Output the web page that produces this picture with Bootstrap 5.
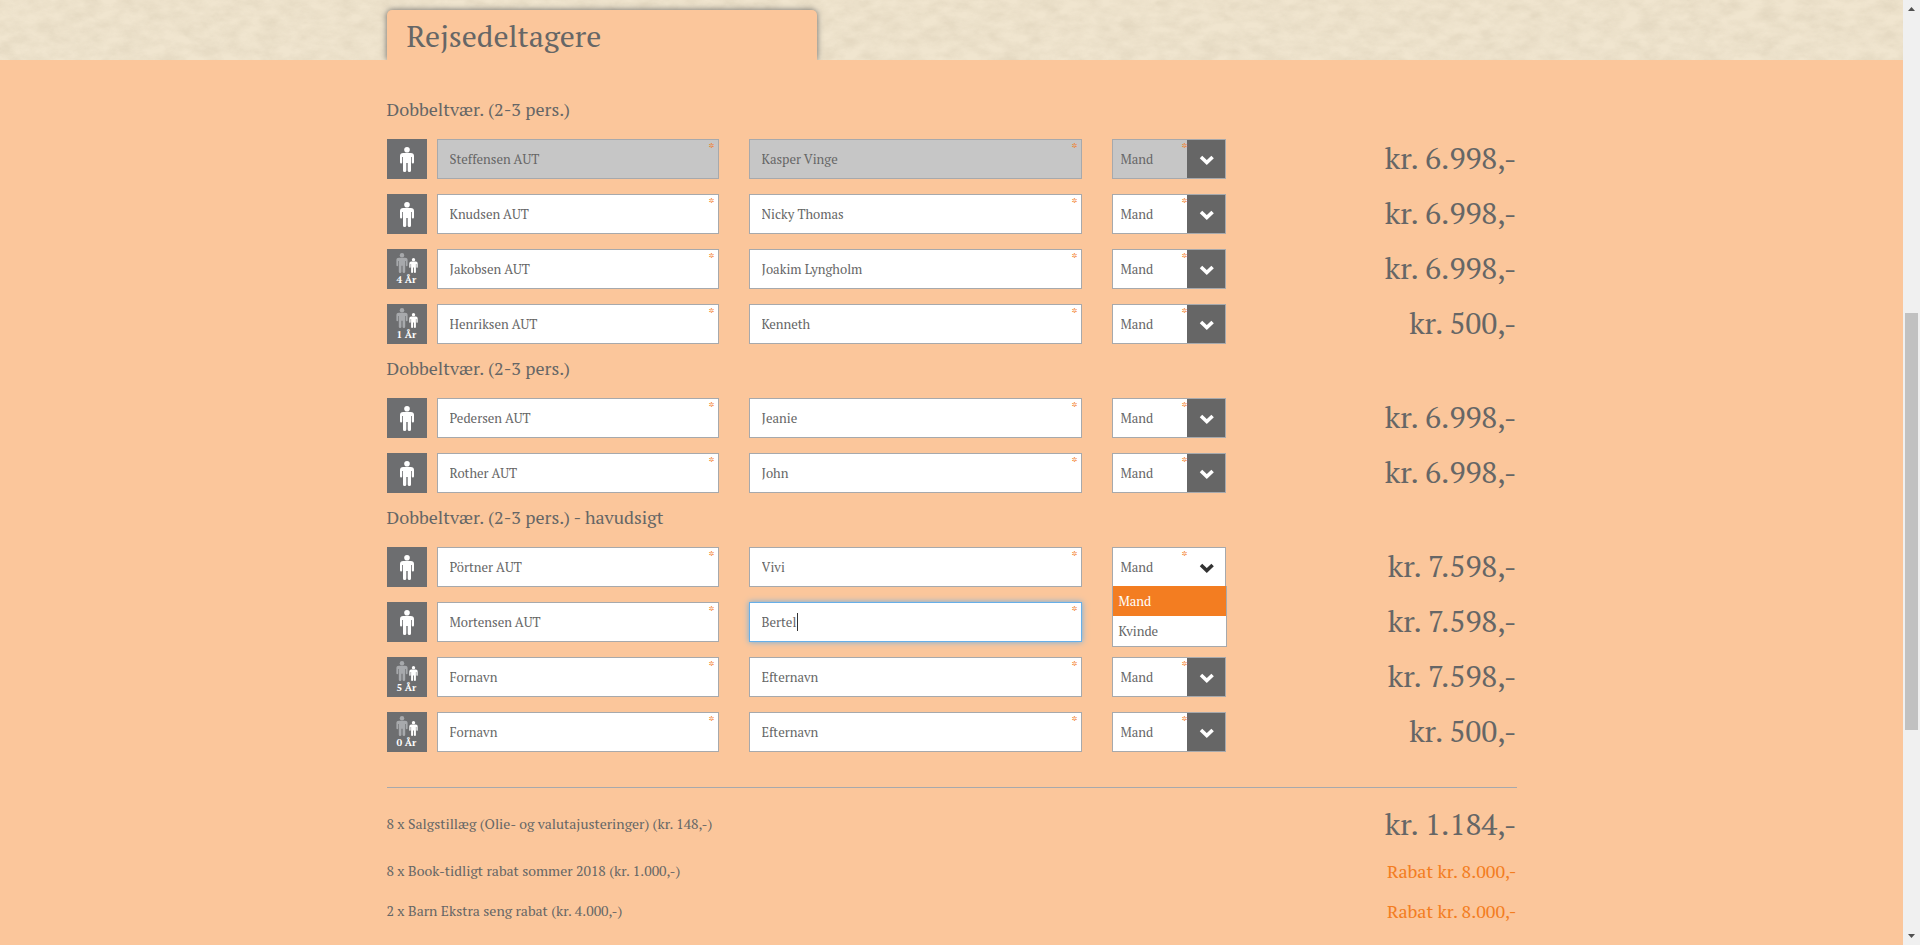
<!DOCTYPE html>
<html lang="da">
<head>
<meta charset="utf-8">
<meta name="viewport" content="width=device-width, initial-scale=1">
<title>Rejsedeltagere</title>
<link href="https://cdn.jsdelivr.net/npm/bootstrap@5.3.0/dist/css/bootstrap.min.css" rel="stylesheet">
<style>
:root { --ink:#666; --peach:#fbc69b; --line:#a7a9ac; --accent:#f37d21; }
body { font-family:"PT Serif","Liberation Serif",serif; font-size:13px; line-height:20px; color:var(--ink); background:var(--peach); }
.booking { max-width:1130px; }
.paper { height:60px; background:#f0e5cf; }
.tab-title { width:430px; max-width:100%; height:50px; margin:10px 0 0; padding:0 20px; background:var(--peach); border-radius:5px 5px 0 0; box-shadow:0 0 6px #666; font-size:30px; line-height:52px; font-weight:400; }
.participants { padding-top:40px; background:var(--peach); }
.room-title { font-size:18px; line-height:18px; font-weight:400; margin:0 0 21px; }
.traveller { height:40px; margin-bottom:15px; }
.who { width:40px; height:40px; margin-right:10px; background:#6d6e70; color:#fff; }
.who svg { display:block; }
.age { left:0; right:0; bottom:2px; font-size:10px; line-height:14px; font-weight:700; text-align:center; }
.first-name { flex:0 1 282px; margin-right:30px; }
.last-name { flex:0 1 333px; margin-right:30px; }
.gender { flex:0 0 114px; }
.field { height:40px; padding:0 12px; border:1px solid var(--line); border-radius:0; color:var(--ink); font-size:13px; line-height:20px; background-color:#fff; }
.field::placeholder { color:var(--ink); opacity:1; }
.field:disabled { background-color:#c6c6c6; opacity:1; color:var(--ink); }
.gender .field { appearance:none; width:100%; padding:0 8px; }
.field.active-field { border-color:#66afe9; box-shadow:0 0 6px #66afe9; }
.caret-bar { left:48px; top:11px; width:1px; height:18px; background:#333; }
.req { top:3px; right:4px; color:var(--accent); font-size:13px; line-height:13px; pointer-events:none; }
.gender .req { right:38px; }
.arrow { top:1px; right:1px; width:38px; height:38px; background:var(--ink); color:#fff; pointer-events:none; }
.open .arrow { background:#fff; color:#333; }
.choices { top:39px; left:0; width:115px; z-index:5; border:1px solid var(--line); border-top:0; background:#fff; }
.choices li { height:30px; padding:0 6px; line-height:30px; }
.choices .chosen { background:var(--accent); color:#fff; }
.price { font-size:30px; line-height:38px; white-space:nowrap; }
.extras { margin-top:35px; border-top:1px solid var(--line); padding:9px 0 14px; }
.extra { min-height:40px; font-size:14px; }
.extra:first-child { min-height:54px; }
.discount { font-size:18px; color:var(--accent); }
.scroller { flex:0 0 17px; height:100vh; top:0; background:#f0f0f0; padding:6px 0; }
.thumb { width:13px; height:417px; margin-left:2px; background:#c1c1c1; }
.above { height:301px; }
</style>
</head>
<body>
<svg width="0" height="0" class="position-absolute" aria-hidden="true">
  <symbol id="person" viewBox="0 0 14 25">
    <circle cx="7" cy="2.8" r="2.8"/>
    <path d="M3.2 6H10.8Q14 6 14 9V15.2Q14 16.5 12.9 16.5T11.8 15.2V10H11V23.4Q11 25 9.4 25T7.7 23.4V16H6.3V23.4Q6.3 25 4.6 25T3 23.4V10H2.2V15.2Q2.2 16.5 1.1 16.5T0 15.2V9Q0 6 3.2 6Z"/>
  </symbol>
  <symbol id="adult" viewBox="0 0 40 40"><use href="#person" x="13" y="8" width="14" height="25" fill="#fff"/></symbol>
  <symbol id="child" viewBox="0 0 40 40">
    <use href="#person" x="9" y="4" width="12" height="20" fill="#a7a9ac"/>
    <use href="#person" x="22" y="9" width="9" height="15" fill="#fff"/>
  </symbol>
  <symbol id="chevron" viewBox="0 0 38 38"><path d="M14 17L19.8 22.500L25.600 17" fill="none" stroke="currentColor" stroke-width="3.6"/></symbol>
</svg>
<div class="d-flex align-items-start">
<main class="flex-grow-1">
  <header class="paper position-relative overflow-hidden">
    <svg class="position-absolute top-0 start-0 w-100 h-100" aria-hidden="true">
      <filter id="grain" x="0" y="0" width="100%" height="100%">
        <feTurbulence type="fractalNoise" baseFrequency=".05 .09" numOctaves="6" seed="21"/>
        <feColorMatrix values="0 0 0 0 .58  0 0 0 0 .50  0 0 0 0 .36  .8 .6 0 0 -.5"/>
      </filter>
      <rect width="100%" height="100%" filter="url(#grain)" opacity=".5"/>
    </svg>
    <div class="booking mx-auto d-flex position-relative"><h1 class="tab-title">Rejsedeltagere</h1></div>
  </header>
  <form class="participants" id="list">
    <div class="booking mx-auto" id="rooms"></div>
    <div class="booking mx-auto">
      <div class="extras">
        <div class="extra d-flex justify-content-between align-items-center"><span>8 x Salgstillæg (Olie- og valutajusteringer) (kr. 148,-)</span><span class="price">kr. 1.184,-</span></div>
        <div class="extra d-flex justify-content-between align-items-center"><span>8 x Book-tidligt rabat sommer 2018 (kr. 1.000,-)</span><span class="discount">Rabat kr. 8.000,-</span></div>
        <div class="extra d-flex justify-content-between align-items-center"><span>2 x Barn Ekstra seng rabat (kr. 4.000,-)</span><span class="discount">Rabat kr. 8.000,-</span></div>
      </div>
    </div>
  </form>
</main>
<div class="scroller position-sticky d-flex flex-column" aria-hidden="true">
  <svg width="17" height="6" viewBox="0 0 17 6"><path d="M5 5L8.500 1L12 5Z" fill="#505050"/></svg>
  <div class="above"></div>
  <div class="thumb"></div>
  <svg class="mt-auto" width="17" height="6" viewBox="0 0 17 6"><path d="M5 1L8.500 5L12 1Z" fill="#505050"/></svg>
</div>
</div>
<script>
// first name, last name, price, optional age and state
const rooms = [
  ["Dobbeltvær. (2-3 pers.)", [
    ["Steffensen AUT", "Kasper Vinge", "6.998", {locked: true}],
    ["Knudsen AUT", "Nicky Thomas", "6.998", {}],
    ["Jakobsen AUT", "Joakim Lyngholm", "6.998", {age: "4 År"}],
    ["Henriksen AUT", "Kenneth", "500", {age: "1 År"}]]],
  ["Dobbeltvær. (2-3 pers.)", [
    ["Pedersen AUT", "Jeanie", "6.998", {}],
    ["Rother AUT", "John", "6.998", {}]]],
  ["Dobbeltvær. (2-3 pers.) - havudsigt", [
    ["Pörtner AUT", "Vivi", "7.598", {open: true}],
    ["Mortensen AUT", "Bertel", "7.598", {active: true}],
    ["", "", "7.598", {age: "5 År"}],
    ["", "", "500", {age: "0 År"}]]]
];
const star = '<span class="req position-absolute" aria-hidden="true">*</span>';
const menu = '<ul class="choices list-unstyled position-absolute mb-0" role="listbox"><li class="chosen" role="option" aria-selected="true">Mand</li><li role="option">Kvinde</li></ul>';
const traveller = ([first, last, price, o]) => {
  const off = o.locked ? "disabled" : "";
  return `<div class="traveller d-flex">
    <div class="who flex-shrink-0 position-relative"><svg width="40" height="40"><use href="#${o.age ? "child" : "adult"}"/></svg>${o.age ? `<span class="age position-absolute">${o.age}</span>` : ""}</div>
    <div class="first-name position-relative"><input class="field form-control" type="text" aria-label="Fornavn" placeholder="Fornavn" value="${first}" ${off}>${star}</div>
    <div class="last-name position-relative"><input class="field form-control ${o.active ? "active-field" : ""}" type="text" aria-label="Efternavn" placeholder="Efternavn" value="${last}" ${off}>${star}${o.active ? '<span class="caret-bar position-absolute"></span>' : ""}</div>
    <div class="gender position-relative ${o.open ? "open" : ""}"><select class="field" aria-label="Køn" ${off}><option>Mand</option><option>Kvinde</option></select><svg class="arrow position-absolute"><use href="#chevron"/></svg>${star}${o.open ? menu : ""}</div>
    <div class="price flex-grow-1 text-end">kr. ${price},-</div>
  </div>`;
};
document.getElementById("rooms").innerHTML = rooms.map(([name, people]) =>
  `<section><h2 class="room-title">${name}</h2>${people.map(traveller).join("")}</section>`).join("");
</script>
<script src="https://cdn.jsdelivr.net/npm/bootstrap@5.3.0/dist/js/bootstrap.bundle.min.js"></script>
</body>
</html>
